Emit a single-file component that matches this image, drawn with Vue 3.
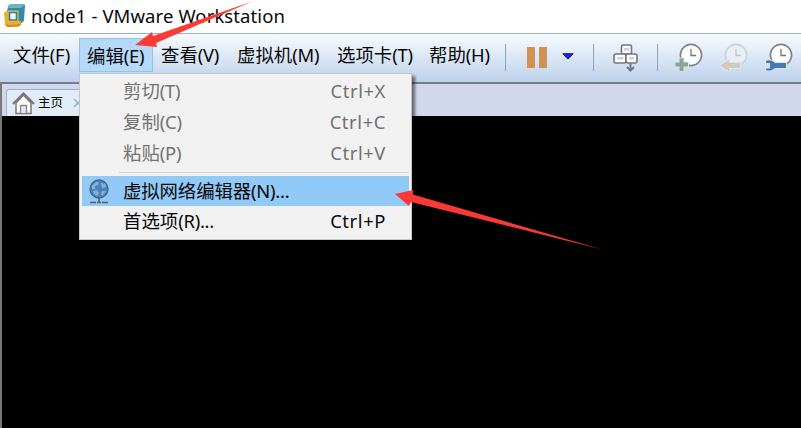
<script setup>
const menus = [
  { label: '文件', key: '(F)', width: 74 },
  { label: '编辑', key: '(E)', width: 74, active: true },
  { label: '查看', key: '(V)', width: 76 },
  { label: '虚拟机', key: '(M)', width: 100 },
  { label: '选项卡', key: '(T)', width: 92 },
  { label: '帮助', key: '(H)', width: 77 },
]
const clipboard = [
  { label: '剪切', key: '(T)', shortcut: 'Ctrl+X' },
  { label: '复制', key: '(C)', shortcut: 'Ctrl+C' },
  { label: '粘贴', key: '(P)', shortcut: 'Ctrl+V' },
]
</script>

<template>
  <div class="window">
    <header class="titlebar">
      <svg class="logo" width="24" height="25" viewBox="0 0 24 25">
        <path d="M7 1.500L20 1Q22 1 22 3L21 17Q21 19 18.500 20L7 18L4 8L5 4Q5 2 7 1.500Z" fill="#348ba5" />
        <path d="M7 1.500L20 1Q22 1 21 2.500L18 5H5Q5 2 7 1.500Z" fill="#69b5c6" />
        <path d="M3 8.500Q1 8.500 1 10.500L2 20Q2.500 24 6 24L15 23.500Q18 23 18 20V18H6V8.500Z" fill="#f2ad2b" />
        <path d="M2 20Q3 22 6 22L15 21.500Q17 21.500 18 19V20Q18 23 15 23.500L6 24Q3 24 2 21Z" fill="#d9880f" />
        <path d="M5 7.500H15.500V18.500H5Z" fill="#f9bf42" />
        <path d="M6.500 9.500H13.500V17H6.500Z" fill="#f4fafb" stroke="#2b829c" stroke-width="1.700" />
      </svg>
      <span class="title">node1 - VMware Workstation</span>
    </header>

    <nav class="toolbar">
      <div
        v-for="m in menus"
        :key="m.label"
        class="menu"
        :class="{ active: m.active }"
        :style="{ width: m.width + 'px' }"
      ><span>{{ m.label }}</span><span class="key">{{ m.key }}</span></div>
      <i class="divider first"></i>
      <svg class="pause" width="20" height="21"><path d="M0 0H8V21H0ZM12 0H20V21H12Z" fill="#d2924e" /><path d="M7.5 0V21M19.5 0V21" stroke="#b59a86" /></svg>
      <svg class="caret" width="12" height="7"><path d="M.8 .8H11.2L6 6Z" fill="#1422fa" stroke="#080c58" /></svg>
      <i class="divider second"></i>
      <svg class="keys" width="25" height="29" viewBox="0 0 25 29">
        <g fill="#fafcfe" stroke="#777" stroke-width="1.6">
          <rect x="8.5" y="1" width="10" height="9" rx="1.5" />
          <rect x="1" y="10" width="12" height="9" rx="2" />
          <rect x="13" y="10" width="11" height="9" rx="2" />
        </g>
        <path d="M11 4H16.500V6.500H11ZM4 13H10.500V15.500H4ZM16 13H21V15.500H16Z" fill="#c5d3e8" />
        <path d="M17.500 19V26M14 23L17.500 26.500L21 23" fill="none" stroke="#737a82" stroke-width="2" />
      </svg>
      <i class="divider third"></i>
      <svg class="clock" width="28" height="28" viewBox="0 0 28 28">
        <circle cx="16" cy="12" r="10.600" fill="#fcfdfd" stroke="#858585" stroke-width="1.700" />
        <path d="M16 6V12.500H21" fill="none" stroke="#777" stroke-width="1.300" />
        <path d="M4.500 15.500H8.500V19.500H13V23.500H8.500V28H4.500V23.500H.5V19.500H4.500Z" fill="#89a395" stroke="#dce6f2" stroke-width="2" paint-order="stroke" />
      </svg>
      <svg class="clock" width="28" height="28" viewBox="0 0 28 28">
        <circle cx="16" cy="12" r="10.600" fill="#e8eef6" stroke="#ccd1d7" stroke-width="1.600" />
        <path d="M16 6V12.500H21" fill="none" stroke="#c0c5cb" stroke-width="1.300" />
        <path d="M0 22.500L9 17V20H20V25H9V28Z" fill="#d3c9bf" stroke="#dce6f2" stroke-width="2" paint-order="stroke" />
      </svg>
      <svg class="clock" width="28" height="28" viewBox="0 0 28 28">
        <circle cx="16" cy="12" r="10.600" fill="#fcfdfd" stroke="#858585" stroke-width="1.700" />
        <path d="M16 6V12.500H21" fill="none" stroke="#777" stroke-width="1.300" />
        <path d="M1 18Q6 16 10 20H21V25H10Q6 29 1 27V25.500H5V20H1Z" fill="#447bb1" stroke="#dce6f2" stroke-width="2" paint-order="stroke" />
      </svg>
    </nav>

    <section class="tabs">
      <div class="tab">
        <svg width="23" height="23" viewBox="0 0 23 23">
          <path d="M4 11V21.500H19V11L11.500 3Z" fill="#fcfcfc" stroke="#777" stroke-width="1.500" />
          <path d="M1 12L11.500 1.500L22 12" fill="none" stroke="#777" stroke-width="2.200" />
          <path d="M8.500 21V13.500H14.500V21" fill="#dfe8f5" stroke="#888" stroke-width="1.300" />
        </svg>
        <span class="home">主页</span>
        <svg class="close" width="8" height="8"><path d="M1 0L5 4L1 8M8 1L5 4L8 7" fill="none" stroke="#95b5d0" stroke-width="1.600" /></svg>
      </div>
    </section>
    <main class="console"></main>

    <div class="popup">
      <div v-for="c in clipboard" :key="c.label" class="item disabled">
        <span>{{ c.label }}<span class="key">{{ c.key }}</span></span>
        <span class="shortcut">{{ c.shortcut }}</span>
      </div>
      <hr />
      <div class="item selected">
        <svg class="globe" width="20" height="25" viewBox="0 0 20 25">
          <circle cx="10" cy="10" r="9" fill="#4a84bb" stroke="#486480" stroke-width="1.300" />
          <path d="M3 7L7 3H10L9 6L6 7V10H3ZM12 4L16 5L17 8L13 9ZM4 12L8 11L10 14L8 17L5 15ZM13 12L17 12L14 16H12Z" fill="#83b2dd" />
          <path d="M10 19V23M1 23.500H7M8 23.500H12M13 23.500H19" stroke="#555e68" stroke-width="1.600" />
        </svg>
        <span>虚拟网络编辑器<span class="key">(N)...</span></span>
      </div>
      <div class="item preferences">
        <span>首选项<span class="key">(R)...</span></span>
        <span class="shortcut">Ctrl+P</span>
      </div>
    </div>

    <svg class="arrows" width="801" height="428">
      <path d="M135 45L152 32L153 36L252 1.500L156 43L157 47Z" fill="#fc3b37" />
      <path d="M395 194L413 190L413 194.500L602 249.500L411 202L409 206Z" fill="#fc3836" />
    </svg>
  </div>
</template>

<style>
body { margin: 0; overflow: hidden; }
</style>
<style scoped>
.window { position: relative; width: 801px; height: 428px; background: #000; color: #080808; font: 18.4px/26px "Noto Sans", "Noto Sans CJK SC", sans-serif; font-weight: 400; overflow: hidden; white-space: nowrap; }
.key { letter-spacing: -.25px; }
.titlebar { height: 33px; display: flex; background: #fff; box-sizing: border-box; padding: 3px 0 0 3px; }
.title { margin-left: 4px; font-size: 18.500px; letter-spacing: .1px; }
.toolbar { height: 51px; display: flex; align-items: flex-start; box-sizing: border-box; padding: 4px 0 0 5px; border-top: 1px solid #94b3dc; border-bottom: 2px solid #777d83; background: linear-gradient(#f8fbfe, #bdd1eb); }
.menu { height: 34px; flex: none; display: flex; box-sizing: border-box; padding: 4px 0 0 8px; }
.active { background: #b5d9f9; border: 1px solid #8dc3ef; padding: 4px 0 0 7px; }
.divider { width: 1px; height: 27px; background: #7fa5cd; flex: none; margin-top: 6px; }
.first { margin-left: 7px; }
.pause { margin: 9px 0 0 21px; }
.caret { margin: 15px 0 0 15px; }
.second { margin-left: 19px; }
.keys { margin: 6px 0 0 19px; }
.third { margin-left: 19px; }
.clock { flex: none; margin: 5px 0 0 17px; }
.third + .clock { margin-left: 17px; }
.tabs { height: 32px; box-sizing: border-box; background: #d2d8eb; padding: 5px 0 0 4px; border-left: 2px solid #777; }
.tab { width: 110px; height: 27px; display: flex; align-items: center; gap: 3px; box-sizing: border-box; padding-left: 5px; border: 1px solid #98b6d2; border-bottom: 0; border-radius: 3px 0 0; background: #e2ebf8; }
.home { font-size: 12.500px; margin-left: 0; }
.close { margin-left: 7px; }
.console { height: 312px; box-sizing: border-box; border-left: 2px solid #777; }
.popup { position: absolute; left: 79px; top: 73px; width: 333px; height: 167px; box-sizing: border-box; padding: 1px 2px 2px; border: 1px solid #c6c6c6; background: #f1f1f1; box-shadow: 3px 3px 3px #0008; }
.item { height: 31px; box-sizing: border-box; display: flex; justify-content: space-between; align-items: center; padding: 0 23px 0 41px; }
.shortcut { letter-spacing: .6px; }
.disabled { color: #727272; }
.popup hr { margin: 4px 0 3px 37px; height: 1px; border: 0; background: #d4d4d4; }
.selected { height: 30px; background: #91c9f7; justify-content: flex-start; padding-left: 7px; letter-spacing: -.1px; }
.globe { margin-right: 14px; flex: none; }
.preferences { height: 30px; }
.arrows { position: absolute; left: 0; top: 0; }
</style>
